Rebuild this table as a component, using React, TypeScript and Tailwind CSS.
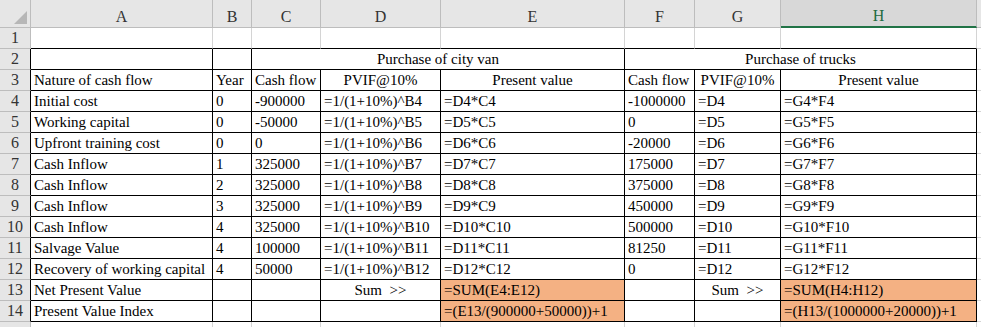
import React from 'react';

type Cell = { text?: string; center?: boolean; fill?: boolean; span?: number };

const columns = ['A', 'B', 'C', 'D', 'E', 'F', 'G', 'H'];

const row = (...cells: (string | Cell)[]): Cell[] =>
  cells.map((c) => (typeof c === 'string' ? { text: c } : c));

const data: Cell[][] = [
  row('', '', { text: 'Purchase of city van', center: true, span: 3 }, { text: 'Purchase of trucks', center: true, span: 3 }),
  row('Nature of cash flow', 'Year', 'Cash flow', { text: 'PVIF@10%', center: true }, { text: 'Present value', center: true }, 'Cash flow', { text: 'PVIF@10%', center: true }, { text: 'Present value', center: true }),
  row('Initial cost', '0', '-900000', '=1/(1+10%)^B4', '=D4*C4', '-1000000', '=D4', '=G4*F4'),
  row('Working capital', '0', '-50000', '=1/(1+10%)^B5', '=D5*C5', '0', '=D5', '=G5*F5'),
  row('Upfront training cost', '0', '0', '=1/(1+10%)^B6', '=D6*C6', '-20000', '=D6', '=G6*F6'),
  row('Cash Inflow', '1', '325000', '=1/(1+10%)^B7', '=D7*C7', '175000', '=D7', '=G7*F7'),
  row('Cash Inflow', '2', '325000', '=1/(1+10%)^B8', '=D8*C8', '375000', '=D8', '=G8*F8'),
  row('Cash Inflow', '3', '325000', '=1/(1+10%)^B9', '=D9*C9', '450000', '=D9', '=G9*F9'),
  row('Cash Inflow', '4', '325000', '=1/(1+10%)^B10', '=D10*C10', '500000', '=D10', '=G10*F10'),
  row('Salvage Value', '4', '100000', '=1/(1+10%)^B11', '=D11*C11', '81250', '=D11', '=G11*F11'),
  row('Recovery of working capital', '4', '50000', '=1/(1+10%)^B12', '=D12*C12', '0', '=D12', '=G12*F12'),
  row('Net Present Value', '', '', { text: 'Sum  >>', center: true }, { text: '=SUM(E4:E12)', fill: true }, '', { text: 'Sum  >>', center: true }, { text: '=SUM(H4:H12)', fill: true }),
  row('Present Value Index', '', '', '', { text: '=(E13/(900000+50000))+1', fill: true }, '', '', { text: '=(H13/(1000000+20000))+1', fill: true }),
];

const App: React.FC = () => {
  return (
    <div
      className="w-[981px] h-[327px] overflow-hidden bg-white text-black text-[15px] leading-none"
      style={{ fontFamily: '"Liberation Serif", "Times New Roman", serif' }}
    >
      <div className="grid grid-cols-[31px_182px_39px_69px_120px_184px_70px_86px_196px_1fr] grid-rows-[28px_repeat(15,21px)]">
        {/* column headers */}
        <div className="relative bg-[#e6e6e6] border-r border-b border-[#bdbdbd]">
          <div className="absolute right-[3px] bottom-[3px] w-0 h-0 border-l-[13px] border-l-transparent border-b-[13px] border-b-[#b7b7b7]" />
        </div>
        {columns.map((c) =>
          c === 'H' ? (
            <div key={c} className="flex items-end justify-center pb-[2px] bg-[#d8d8d8] border-r border-[#bdbdbd] border-b-2 border-b-[#217346] text-[#1e6b41] text-[16px]">
              {c}
            </div>
          ) : (
            <div key={c} className="flex items-end justify-center pb-[2px] bg-[#e6e6e6] border-r border-b border-[#bdbdbd] text-[#333] text-[16px]">
              {c}
            </div>
          )
        )}
        <div className="bg-[#e6e6e6] border-b border-[#bdbdbd]" />

        {/* row 1 */}
        <div className="flex items-center justify-center bg-[#e6e6e6] border-r border-b border-[#bdbdbd] text-[#333] text-[16px]">1</div>
        {columns.map((c) => (
          <div key={c} className="border-r border-[#d4d4d4] border-b border-b-black" />
        ))}
        <div className="border-b border-[#d4d4d4]" />

        {/* rows 2-14 */}
        {data.map((cells, i) => (
          <React.Fragment key={i}>
            <div className="flex items-center justify-center bg-[#e6e6e6] border-b border-[#bdbdbd] border-r border-r-black text-[#333] text-[16px]">
              {i + 2}
            </div>
            {cells.map((cell, j) => (
              <div
                key={j}
                className={`flex items-center whitespace-pre overflow-visible border-r border-b border-black px-[3px] ${cell.center ? 'justify-center' : 'justify-start'} ${cell.fill ? 'bg-[#f4b183]' : ''}`}
                style={cell.span ? { gridColumn: `span ${cell.span} / span ${cell.span}` } : undefined}
              >
                {cell.text}
              </div>
            ))}
            <div className="border-b border-[#d4d4d4]" />
          </React.Fragment>
        ))}

        {/* row 15, only its top edge shows */}
        <div className="bg-[#e6e6e6] border-r border-[#bdbdbd]" />
        {columns.map((c) => (
          <div key={c} className="border-r border-[#d4d4d4]" />
        ))}
        <div />
      </div>
    </div>
  );
};

export default App;
